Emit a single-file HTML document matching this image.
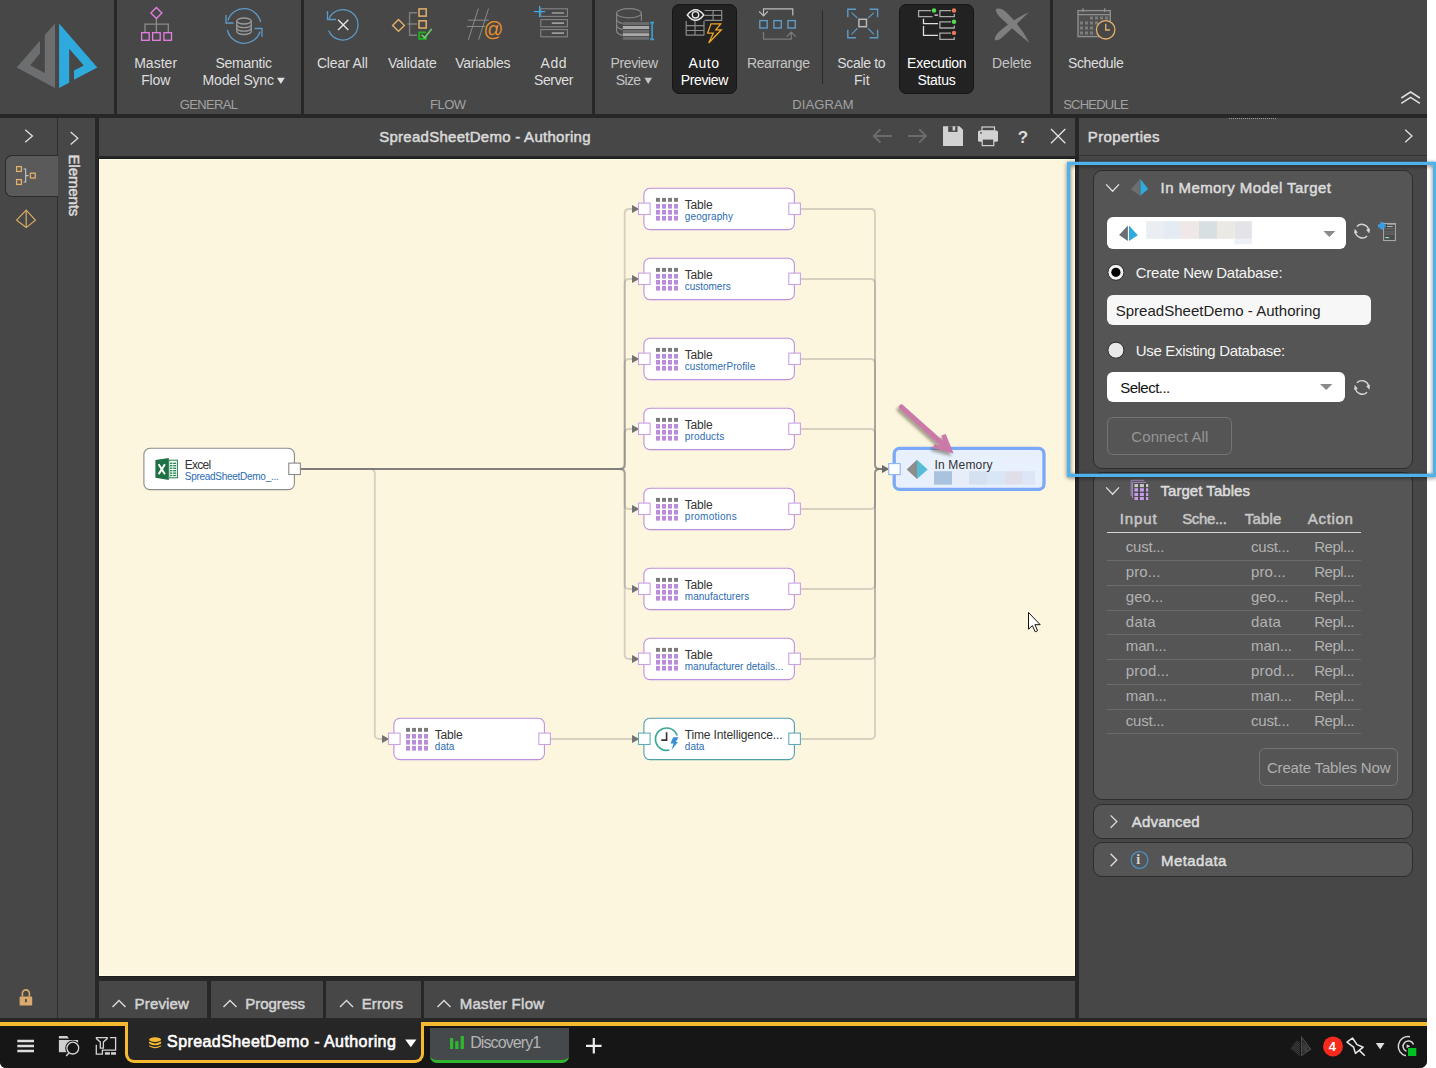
<!DOCTYPE html><html><head><meta charset="utf-8"><title>SpreadSheetDemo - Authoring</title><style>
html,body{margin:0;padding:0;background:#fff;}
body{width:1436px;height:1068px;position:relative;overflow:hidden;font-family:"Liberation Sans",sans-serif;}
#app div,#app svg,#app span{position:absolute;}
#app{position:absolute;left:0;top:0;width:1436px;height:1068px;overflow:hidden;}
#app span{white-space:pre;line-height:1;}
#app svg{overflow:visible;}
</style></head><body><div id="app"><div style="left:0px;top:0px;width:1427px;height:1068px;background:#272727;border-radius:0 0 7px 6px;"></div><div style="left:0px;top:0px;width:114px;height:114px;background:#474747;"></div><div style="left:117px;top:0px;width:184px;height:114px;background:#474747;"></div><div style="left:304px;top:0px;width:288px;height:114px;background:#474747;"></div><div style="left:595px;top:0px;width:455px;height:114px;background:#474747;"></div><div style="left:1053px;top:0px;width:374px;height:114px;background:#474747;"></div><div style="left:0px;top:118px;width:57px;height:900px;background:#474747;"></div><div style="left:57px;top:118px;width:1px;height:900px;background:#2e2e2e;"></div><div style="left:58px;top:118px;width:37px;height:900px;background:#474747;"></div><div style="left:99px;top:118px;width:976px;height:38px;background:#474747;"></div><div style="left:99px;top:159px;width:976px;height:817px;background:#fdf6df;box-shadow:inset 0 0 0 1px #fffce7, 0 0 0 1px #1d1d1f;"></div><div style="left:1079px;top:118px;width:348px;height:900px;background:#474747;"></div><div style="left:99px;top:981px;width:108px;height:37px;background:#474747;"></div><div style="left:210.5px;top:981px;width:112.5px;height:37px;background:#474747;"></div><div style="left:326px;top:981px;width:95px;height:37px;background:#474747;"></div><div style="left:424px;top:981px;width:651px;height:37px;background:#474747;"></div><div style="left:0px;top:1022px;width:1427px;height:46px;background:#161616;border-radius:0 0 7px 6px;"></div><svg style="left:0;top:0" width="1436" height="1068" viewBox="0 0 1436 1068">
<polygon points="55,23.6 55,88 16.7,67.4 40,40.8 40,53.6 30.2,65.2 44.8,73.1 44.8,34.9" fill="#6d6e70"/>
<polygon points="59.1,23.6 97.3,67.4 74,79.8 74,70.4 83.8,65.6 69.2,48.7 69.2,82.8 59.1,88" fill="#2eaadc"/>
</svg><span style="left:134.20px;top:56.00px;font-size:14px;color:#dedede;letter-spacing:0.013px;">Master</span><span style="left:141.20px;top:73.00px;font-size:14px;color:#dedede;letter-spacing:-0.167px;">Flow</span><span style="left:215.50px;top:56.00px;font-size:14px;color:#dedede;letter-spacing:-0.257px;">Semantic</span><span style="left:202.60px;top:73.00px;font-size:14px;color:#dedede;letter-spacing:-0.200px;">Model Sync</span><span style="left:179.85px;top:98.00px;font-size:13px;color:#a2a2a2;letter-spacing:-0.678px;">GENERAL</span><span style="left:316.90px;top:56.00px;font-size:14px;color:#dedede;letter-spacing:-0.148px;">Clear All</span><span style="left:387.90px;top:56.00px;font-size:14px;color:#dedede;letter-spacing:-0.086px;">Validate</span><span style="left:455.30px;top:56.00px;font-size:14px;color:#dedede;letter-spacing:-0.259px;">Variables</span><span style="left:540.60px;top:56.00px;font-size:14px;color:#dedede;letter-spacing:0.469px;">Add</span><span style="left:534.00px;top:73.00px;font-size:14px;color:#dedede;letter-spacing:-0.375px;">Server</span><span style="left:429.95px;top:98.00px;font-size:13px;color:#a2a2a2;letter-spacing:-0.464px;">FLOW</span><span style="left:610.50px;top:56.00px;font-size:14px;color:#c4c4c4;letter-spacing:-0.356px;">Preview</span><span style="left:615.80px;top:73.00px;font-size:14px;color:#c4c4c4;letter-spacing:-0.658px;">Size</span><span style="left:688.60px;top:56.00px;font-size:14px;color:#ffffff;letter-spacing:0.516px;z-index:2;">Auto</span><span style="left:680.70px;top:73.00px;font-size:14px;color:#ffffff;letter-spacing:-0.356px;z-index:2;">Preview</span><span style="left:747.00px;top:56.00px;font-size:14px;color:#c4c4c4;letter-spacing:-0.400px;">Rearrange</span><span style="left:837.30px;top:56.00px;font-size:14px;color:#dedede;letter-spacing:-0.333px;">Scale to</span><span style="left:853.90px;top:73.00px;font-size:14px;color:#dedede;letter-spacing:0.049px;">Fit</span><span style="left:907.10px;top:56.00px;font-size:14px;color:#ffffff;letter-spacing:-0.253px;z-index:2;">Execution</span><span style="left:917.40px;top:73.00px;font-size:14px;color:#ffffff;letter-spacing:-0.269px;z-index:2;">Status</span><span style="left:992.10px;top:56.00px;font-size:14px;color:#c4c4c4;letter-spacing:-0.182px;">Delete</span><span style="left:792.35px;top:98.00px;font-size:13px;color:#a2a2a2;letter-spacing:0.083px;">DIAGRAM</span><span style="left:1068.00px;top:56.00px;font-size:14px;color:#dedede;letter-spacing:-0.376px;">Schedule</span><span style="left:1063.15px;top:98.00px;font-size:13px;color:#a2a2a2;letter-spacing:-0.761px;">SCHEDULE</span><div style="left:672px;top:4px;width:65px;height:90px;background:#222222;border-radius:7px;border:1px solid #151515;box-sizing:border-box;"></div><div style="left:899px;top:4px;width:75px;height:90px;background:#222222;border-radius:7px;border:1px solid #151515;box-sizing:border-box;"></div><div style="left:822px;top:10px;width:1px;height:74px;background:#2b2b2b;"></div><svg style="left:0;top:0" width="1436" height="1068" viewBox="0 0 1436 1068">
<!-- small dropdown triangles -->
<polygon points="277,77.8 284.8,77.8 280.9,84" fill="#dedede"/>
<polygon points="644.4,77.8 652.1,77.8 648.2,84" fill="#c4c4c4"/>
<!-- collapse chevrons -->
<polyline points="1401.3,98 1410.6,92 1419.9,98" fill="none" stroke="#e0e0e0" stroke-width="1.5"/>
<polyline points="1401.3,103.3 1410.6,97.3 1419.9,103.3" fill="none" stroke="#e0e0e0" stroke-width="1.5"/>

<!-- Master Flow -->
<g fill="none" stroke-width="1.3">
<path d="M156.4,18.5V32 M145,32V24.2H168.3V32" stroke="#8c8c8c"/>
<polygon points="156.4,7.5 161.9,13 156.4,18.5 150.9,13" stroke="#e57fe3"/>
<rect x="141.6" y="32.7" width="7.6" height="7.6" stroke="#e57fe3"/>
<rect x="152.6" y="32.7" width="7.6" height="7.6" stroke="#e57fe3"/>
<rect x="163.9" y="32.7" width="7.6" height="7.6" stroke="#e57fe3"/>
</g>

<!-- Semantic model sync -->
<g fill="none" stroke="#5d9bc6" stroke-width="1.3">
<path d="M227.8,20.5A17,17 0 0 1 260.6,22"/>
<path d="M260.2,31.5A17,17 0 0 1 227.4,30"/>
<polyline points="226,15 226,23 233.5,23"/>
<polyline points="262,37 262,28.5 254.5,28.5"/>
</g>
<g fill="none" stroke="#9a9a9a" stroke-width="1.3">
<ellipse cx="244" cy="21" rx="7.2" ry="3"/>
<path d="M236.8,21V31.5A7.2,3 0 0 0 251.2,31.5V21"/>
<path d="M236.8,24.7A7.2,3 0 0 0 251.2,24.7"/>
<path d="M236.8,28.2A7.2,3 0 0 0 251.2,28.2"/>
</g>

<!-- Clear All -->
<g fill="none" stroke-width="1.3">
<path d="M329,18.5A15.2,15.2 0 1 1 328.7,30.5" stroke="#5d9bc6"/>
<polyline points="327.5,11 327.5,19.5 336,19.5" stroke="#5d9bc6"/>
<path d="M338.1,19.7L348.3,29.9M348.3,19.7L338.1,29.9" stroke="#e4e4e4" stroke-width="1.4"/>
</g>

<!-- Validate -->
<g fill="none" stroke-width="1.4">
<polygon points="398.5,19.6 404.4,25.4 398.5,31.2 392.6,25.4" stroke="#e3b06b"/>
<path d="M417,12.7H409.6V35.3H417M407.4,24H417" stroke="#7e7e7e"/>
<rect x="419" y="8.9" width="7.2" height="7.2" stroke="#e3b06b" stroke-width="1.5"/>
<rect x="419" y="20.8" width="7.2" height="7.2" stroke="#e3b06b" stroke-width="1.5"/>
<path d="M426,32.4H419.2V38.8H426V36.5" stroke="#22b322" stroke-width="1.8"/>
<polyline points="421.7,34.8 424.6,37.8 431.7,28.9" stroke="#6ddc6d" stroke-width="1.5"/>
</g>

<!-- Variables -->
<g fill="none" stroke="#8a8a8a" stroke-width="1">
<path d="M478.3,8.6L468.4,39.8M488.5,8.6L478.6,39.8M468.2,20.2H488.8M466.7,26.5H485.5"/>
</g>

<!-- Add Server -->
<g fill="none" stroke="#848484" stroke-width="1.1">
<rect x="540.8" y="8.8" width="26.6" height="7.6"/>
<rect x="540.8" y="19.6" width="26.6" height="7.2"/>
<rect x="540.8" y="29.6" width="26.6" height="7.2"/>
</g>
<path d="M551.8,13H564M551.8,23.1H564M551.8,33.1H564" stroke="#9c9c9c" stroke-width="1.7"/>
<path d="M534,11.6H545.2M539.7,6V17.2" stroke="#3fa9e8" stroke-width="1.4"/>

<!-- Preview Size -->
<g fill="none" stroke="#848484" stroke-width="1.2">
<ellipse cx="629" cy="13.3" rx="12.4" ry="4.6"/>
<path d="M616.6,13.3V31.5Q617.5,34 622.5,35.3M641.4,13.3V21"/>
<path d="M616.6,19.5Q617.5,22.3 622.5,23.5M616.6,25.5Q617.5,28.3 622.5,29.5"/>
</g>
<rect x="622.8" y="22.1" width="26.3" height="2.9" fill="#6c6c6c"/>
<rect x="622.8" y="26" width="26.3" height="3" fill="#a8a8a8"/>
<rect x="622.8" y="29.8" width="26.3" height="2.9" fill="#6c6c6c"/>
<rect x="622.8" y="33.2" width="26.3" height="2.9" fill="#a8a8a8"/>
<rect x="622.8" y="37" width="26.3" height="2.8" fill="#6c6c6c"/>
<path d="M652.1,22.6V39.4M650.1,22.6H654.1M650.1,39.4H654.1" stroke="#3b9fd8" stroke-width="1.6" fill="none"/>

<!-- Rearrange -->
<g fill="none" stroke-width="1.4">
<rect x="759.8" y="20.6" width="7.4" height="7.4" stroke="#5d9bc6"/>
<rect x="773.9" y="20.6" width="7.4" height="7.4" stroke="#5d9bc6"/>
<rect x="787.9" y="20.6" width="7.4" height="7.4" stroke="#5d9bc6"/>
<path d="M792.8,15.5V8.8H763.5V15.6M759.1,11.4L763.5,15.8L767.9,11.4" stroke="#bdbdbd" stroke-width="1.2"/>
<path d="M763.5,32V39.2H791.3V32.4M786.8,36.6L791.3,32.1L795.8,36.6" stroke="#7c7c7c" stroke-width="1.2"/>
</g>

<!-- Scale to Fit -->
<g fill="none" stroke="#5d9bc6" stroke-width="1.4">
<path d="M847.8,17.2V9.2H856M869.6,9.2H877.6V17.2M877.6,29.8V37.8H869.6M856,37.8H847.8V29.8"/>
<path d="M851.5,12.7L857.3,18M874,12.7L868.2,18M874,34.3L868.2,28.5M851.5,34.3L857.3,28.5" stroke-width="1.1"/>
</g>
<rect x="858.9" y="19.3" width="7.6" height="7.4" fill="none" stroke="#b8b8b8" stroke-width="1.5"/>

<!-- Delete -->
<path d="M996,9Q1001,7 1008,14Q1022,28 1029.5,43Q1017,33 1003,20Q995,13 996,9Z" fill="#7e7e7e"/>
<path d="M995,40Q994,36 1001,30Q1014,19 1029,12Q1020,21 1007,33Q998,42 995,40Z" fill="#7e7e7e"/>

<!-- Schedule -->
<rect x="1078" y="10.6" width="32.3" height="26" fill="#505050" stroke="#8e8e8e" stroke-width="1.4"/>
<path d="M1078,14.6H1110.3" stroke="#8e8e8e" stroke-width="1.2"/>
<path d="M1083,8.3V12M1104.6,8.3V12" stroke="#8e8e8e" stroke-width="1.4"/>
<g fill="#7c7c7c">
<rect x="1090" y="16.5" width="3" height="3"/><rect x="1095" y="16.5" width="3" height="3"/><rect x="1100" y="16.5" width="3" height="3"/><rect x="1105" y="16.5" width="3" height="3"/>
<rect x="1080" y="21.5" width="3" height="3"/><rect x="1085" y="21.5" width="3" height="3"/><rect x="1090" y="21.5" width="3" height="3"/><rect x="1095" y="21.5" width="3" height="3"/>
<rect x="1080" y="26.5" width="3" height="3"/><rect x="1085" y="26.5" width="3" height="3"/><rect x="1090" y="26.5" width="3" height="3"/>
<rect x="1080" y="31.5" width="3" height="3"/><rect x="1085" y="31.5" width="3" height="3"/><rect x="1090" y="31.5" width="3" height="3"/>
</g>
<circle cx="1105.7" cy="29.8" r="9.2" fill="#474747" stroke="#e3b06b" stroke-width="1.3"/>
<path d="M1105.7,23.8V30H1110" fill="none" stroke="#e3b06b" stroke-width="1.3"/>
</svg><span style="left:483.42px;top:19.79px;font-size:19.5px;color:#e8912c;">@</span><svg style="left:0;top:0;z-index:3" width="1436" height="120" viewBox="0 0 1436 120">
<!-- Auto preview -->
<g fill="none" stroke="#8a8a8a" stroke-width="1.2">
<path d="M704.6,10.5H721.7V20.4H704.6M713.1,10.5V20.4M704.6,15.4H721.7"/>
<path d="M686.2,21V35.2H704M686.2,25.7H704M686.2,30.5H704M695,21V35.2M704,21V35.2"/>
</g>
<path d="M687.3,15Q695.5,4.5 703.8,15Q695.5,25.5 687.3,15Z" fill="#222" stroke="#e8e8e8" stroke-width="1.4"/>
<circle cx="695.5" cy="14.8" r="3.2" fill="none" stroke="#e8e8e8" stroke-width="1.4"/>
<path d="M711,23.8H720.7L715.8,29.8H721.3L708.7,43L713.3,33.2H707.6Z" fill="none" stroke="#f0a426" stroke-width="1.3"/>
<!-- Execution status -->
<g fill="none" stroke="#a8a8a8" stroke-width="1.3">
<path d="M931,10.6H918.6V16.6H932.5M951,10.6H939.9V16.6H954.3V14"/>
<path d="M951,21.8H939.9V28H954.3V25.5M951,33.2H939.9V39.4H954.3V37"/>
</g>
<path d="M923.5,18.8V23.7H938M923.5,26V35.3H938M934.5,15.2H938" fill="none" stroke="#e0e0e0" stroke-width="1.3"/>
<circle cx="934" cy="10.5" r="2.2" fill="#4fe04f"/>
<circle cx="954" cy="10.5" r="2.2" fill="#ea7858"/>
<circle cx="954" cy="21.8" r="2.2" fill="#4fe04f"/>
<circle cx="954" cy="32.9" r="2.2" fill="#ea7858"/>
</svg><span style="left:379.15px;top:129.00px;font-size:15px;color:#dadada;-webkit-text-stroke:0.5px #dadada;letter-spacing:0.271px;">SpreadSheetDemo - Authoring</span><svg style="left:0;top:0" width="1436" height="1068" viewBox="0 0 1436 1068">
<g fill="none" stroke="#6c6c6c" stroke-width="2">
<path d="M891.7,135.9H874M880.5,129.2L873.8,135.9L880.5,142.6"/>
<path d="M908,135.9H925.7M919.2,129.2L925.9,135.9L919.2,142.6"/>
</g>
<!-- save -->
<path d="M943,126.3H959.5L963,129.8V145.9H943Z" fill="#d2d2d2"/>
<rect x="948.2" y="126.3" width="9.3" height="5.6" fill="#474747"/>
<rect x="952.6" y="126.3" width="2.6" height="4.2" fill="#d2d2d2"/>
<!-- print -->
<rect x="982" y="127" width="12.5" height="4" fill="none" stroke="#d2d2d2" stroke-width="1.2"/>
<rect x="978" y="130.6" width="20" height="11.2" rx="1.5" fill="#d2d2d2"/>
<rect x="980" y="132.3" width="2" height="1.2" fill="#474747"/>
<rect x="982.2" y="139" width="11.6" height="6.6" fill="#474747" stroke="#d2d2d2" stroke-width="1.2"/>
<!-- close -->
<path d="M1051,129L1065.3,143.3M1065.3,129L1051,143.3" stroke="#e2e2e2" stroke-width="1.3"/>
<!-- left panel chevrons -->
<polyline points="25.2,129.8 32.4,136 25.2,142.2" fill="none" stroke="#e0e0e0" stroke-width="1.3"/>
<polyline points="70.7,132 77.8,138.3 70.7,144.6" fill="none" stroke="#e0e0e0" stroke-width="1.3"/>
<polyline points="1405.2,129.7 1412,136 1405.2,142.3" fill="none" stroke="#e0e0e0" stroke-width="1.3"/>
</svg><span style="left:1017.75px;top:129.00px;font-size:17px;color:#dcdcdc;font-weight:700;">?</span><span style="left:1087.75px;top:129.00px;font-size:15px;color:#dadada;-webkit-text-stroke:0.5px #dadada;letter-spacing:0.386px;">Properties</span><div style="left:1229px;top:118px;width:47px;height:1px;background:repeating-linear-gradient(90deg,#9a9a9a 0 1px,transparent 1px 2px);"></div><div style="left:1079px;top:155px;width:348px;height:1px;background:#333333;"></div><div style="left:5px;top:155px;width:53px;height:42px;background:#5a5a5a;border-radius:7px 0 0 7px;border:1px solid #2b2b2b;border-right:none;box-sizing:border-box;"></div><svg style="left:0;top:0" width="1436" height="1068" viewBox="0 0 1436 1068">
<g fill="none" stroke="#e3b06b" stroke-width="1.3">
<rect x="16.6" y="166.6" width="4.8" height="4.8"/>
<rect x="16.6" y="179.6" width="4.8" height="4.8"/>
<rect x="30.4" y="173.2" width="4.8" height="4.8"/>
</g>
<path d="M23.5,169H25.7V182H23.5M25.7,175.6H28.5" fill="none" stroke="#c8c8c8" stroke-width="1.1"/>
<g fill="none" stroke="#d8ac68" stroke-width="1.2">
<polygon points="26.2,210.2 35.4,220.2 26.2,227.6 16.6,220.2"/>
<path d="M26.2,210.2V227.6"/>
</g>
<!-- lock -->
<rect x="19.6" y="996.6" width="12.6" height="9" rx="0.8" fill="#d9a96d"/>
<path d="M22.4,996.6V993.4A3.5,3.5 0 0 1 29.4,993.4V996.6" fill="none" stroke="#d9a96d" stroke-width="1.6"/>
<rect x="25" y="999" width="1.8" height="3.2" fill="#474747"/>
</svg><span style="left:-0.75px;top:-13.00px;font-size:15px;color:#dadada;-webkit-text-stroke:0.5px #dadada;letter-spacing:-0.112px;transform-origin:0 0;transform:translate(83px,167.6px) rotate(90deg);">Elements</span><span style="left:134.55px;top:996.00px;font-size:15px;color:#d4d4d4;-webkit-text-stroke:0.5px #d4d4d4;letter-spacing:0.165px;">Preview</span><span style="left:245.25px;top:996.00px;font-size:15px;color:#d4d4d4;-webkit-text-stroke:0.5px #d4d4d4;letter-spacing:-0.026px;">Progress</span><span style="left:361.75px;top:996.00px;font-size:15px;color:#d4d4d4;-webkit-text-stroke:0.5px #d4d4d4;letter-spacing:0.101px;">Errors</span><span style="left:459.75px;top:996.00px;font-size:15px;color:#d4d4d4;-webkit-text-stroke:0.5px #d4d4d4;letter-spacing:0.266px;">Master Flow</span><svg style="left:0;top:0" width="1436" height="1068" viewBox="0 0 1436 1068">
<g fill="none" stroke="#dcdcdc" stroke-width="1.4">
<polyline points="112.5,1007 119,1000.5 125.5,1007"/>
<polyline points="223.5,1007 230,1000.5 236.5,1007"/>
<polyline points="340,1007 346.5,1000.5 353,1007"/>
<polyline points="437.5,1007 444,1000.5 450.5,1007"/>
</g>
</svg><div style="left:0px;top:1022px;width:1427px;height:4px;background:#f6b92f;"></div><div style="left:125px;top:1022px;width:298.5px;height:41px;background:#262626;border:3.5px solid #f6b92f;border-top:none;border-radius:0 0 9px 9px;box-sizing:border-box;"></div><div style="left:128.5px;top:1022px;width:291.5px;height:4px;background:#262626;"></div><span style="left:167.10px;top:1034.00px;font-size:16px;color:#ffffff;-webkit-text-stroke:0.6px #ffffff;letter-spacing:0.416px;">SpreadSheetDemo - Authoring</span><div style="left:430px;top:1028.4px;width:139.3px;height:34.6px;background:#45494c;border-radius:0 0 7px 7px;border-bottom:3px solid #2fb62f;box-sizing:border-box;"></div><span style="left:470.20px;top:1035.00px;font-size:16px;color:#b4b4b4;letter-spacing:-0.900px;">Discovery1</span><svg style="left:0;top:0" width="1436" height="1068" viewBox="0 0 1436 1068">
<!-- hamburger -->
<path d="M17.3,1040.9H34M17.3,1046H34M17.3,1051H34" stroke="#dcdcdc" stroke-width="2.5"/>
<!-- folder search -->
<path d="M58.9,1036.1H67.2L68.9,1038.6H58.9Z" fill="#d0d0d0"/>
<rect x="58.9" y="1040" width="19.2" height="12.2" fill="#d0d0d0"/>
<circle cx="72.8" cy="1048.1" r="7.6" fill="#161616"/>
<circle cx="72.8" cy="1048.1" r="5.9" fill="#161616" stroke="#d4d4d4" stroke-width="1.3"/>
<path d="M68.9,1053L66.2,1056" stroke="#d4d4d4" stroke-width="1.5"/>
<!-- filter/diagram -->
<path d="M96.4,1037.6H107.2V1038.6L103.4,1042V1048.2H100.3V1042L96.4,1038.6Z" fill="none" stroke="#d4d4d4" stroke-width="1.3"/>
<path d="M109.9,1037.6H115.6V1050.2H102.4V1054.1H96.3V1044.7" fill="none" stroke="#d4d4d4" stroke-width="1.3"/>
<rect x="104.9" y="1052.2" width="5" height="2.5" fill="#d4d4d4"/><rect x="111" y="1052.2" width="5" height="2.5" fill="#d4d4d4"/>
<!-- db icon -->
<g fill="#f6b92f">
<ellipse cx="155.1" cy="1039.6" rx="6" ry="2.3"/>
<path d="M149.1,1041.6Q155.1,1045.2 161.1,1041.6V1043.4Q155.1,1047.2 149.1,1043.4Z"/>
<path d="M149.1,1045.2Q155.1,1048.8 161.1,1045.2V1046.2Q155.1,1050.2 149.1,1046.2Z"/>
</g>
<polygon points="405.2,1039.6 416.4,1039.6 410.8,1047.2" fill="#ffffff"/>
<!-- discovery bars -->
<rect x="450" y="1038" width="3.2" height="11" fill="#2fb62f"/>
<rect x="455.2" y="1041.2" width="3.3" height="7.8" fill="#2fb62f"/>
<rect x="460.6" y="1036" width="3.3" height="13" fill="#2fb62f"/>
<!-- plus -->
<path d="M586,1045.8H601.6M593.8,1038V1053.6" stroke="#ececec" stroke-width="2.2"/>
<!-- dim pyramid logo -->
<clipPath id="lp"><polygon points="1299.9,1036.6 1290.5,1048.3 1299.9,1056.2"/></clipPath>
<path d="M1289,1046.59L1301,1056.55M1289,1044.59L1301,1054.55M1289,1042.59L1301,1052.55M1289,1040.59L1301,1050.55M1289,1038.59L1301,1048.55M1289,1036.59L1301,1046.55M1289,1034.59L1301,1044.55" stroke="#4c4c4c" stroke-width="0.95" fill="none" clip-path="url(#lp)"/>
<polygon points="1302.3,1040.5 1305.6,1044.8 1305.6,1051.2 1302.3,1053.6" fill="#393939"/>
<polygon points="1301.5,1037.4 1310.6,1049.2 1301.5,1055.4" fill="none" stroke="#4e4e4e" stroke-width="1.1"/>
<path d="M1305.9,1044.5V1052" stroke="#4e4e4e" stroke-width="1"/>
<polygon points="1306.8,1046.8 1309.4,1049.2 1306.8,1051" fill="none" stroke="#4e4e4e" stroke-width="0.8"/>
<!-- badge -->
<circle cx="1333" cy="1046.4" r="10" fill="#f62a1d"/>
<!-- pin -->
<g fill="none" stroke="#e8e8e8" stroke-width="1.5" stroke-linejoin="round">
<path d="M1352.5,1038L1347,1042.2L1353.6,1047.2L1355.4,1053.4L1363.2,1047.2L1357,1044.6Z"/>
<path d="M1359.3,1050.4L1364.8,1055.8"/>
</g>
<polygon points="1375.8,1043 1384.5,1043 1380.2,1049.6" fill="#e0e0e0"/>
<!-- target icon -->
<g fill="none" stroke="#d8d8d8" stroke-width="1.5">
<path d="M1410,1036.8A9.6,9.6 0 1 0 1406,1055.8"/>
<path d="M1413.5,1044.5A5.4,5.4 0 1 0 1406.5,1051.4"/>
</g>
<polygon points="1406.6,1044.2 1410.4,1046.2 1406.6,1048" fill="#d8d8d8"/>
<rect x="1408" y="1048" width="8.3" height="8" fill="#00c220"/>
</svg><span style="left:1328.65px;top:1040.00px;font-size:13px;color:#ffffff;font-weight:700;">4</span><svg style="left:0;top:0" width="1436" height="1068" viewBox="0 0 1436 1068"><path d="M300.5,469H620.2Q624.7,469 624.7,464.5V213.5Q624.7,209 629.2,209H633" fill="none" stroke="rgba(118,118,118,0.29)" stroke-width="1.9"/><polygon points="632.0,205.1 639.4,209 632.0,212.9" fill="#727272"/><path d="M300.5,469H620.2Q624.7,469 624.7,464.5V283.5Q624.7,279 629.2,279H633" fill="none" stroke="rgba(118,118,118,0.29)" stroke-width="1.9"/><polygon points="632.0,275.1 639.4,279 632.0,282.9" fill="#727272"/><path d="M300.5,469H620.2Q624.7,469 624.7,464.5V363.5Q624.7,359 629.2,359H633" fill="none" stroke="rgba(118,118,118,0.29)" stroke-width="1.9"/><polygon points="632.0,355.1 639.4,359 632.0,362.9" fill="#727272"/><path d="M300.5,469H620.2Q624.7,469 624.7,464.5V433.5Q624.7,429 629.2,429H633" fill="none" stroke="rgba(118,118,118,0.29)" stroke-width="1.9"/><polygon points="632.0,425.1 639.4,429 632.0,432.9" fill="#727272"/><path d="M300.5,469H620.2Q624.7,469 624.7,473.5V504.5Q624.7,509 629.2,509H633" fill="none" stroke="rgba(118,118,118,0.29)" stroke-width="1.9"/><polygon points="632.0,505.1 639.4,509 632.0,512.9" fill="#727272"/><path d="M300.5,469H620.2Q624.7,469 624.7,473.5V584.5Q624.7,589 629.2,589H633" fill="none" stroke="rgba(118,118,118,0.29)" stroke-width="1.9"/><polygon points="632.0,585.1 639.4,589 632.0,592.9" fill="#727272"/><path d="M300.5,469H620.2Q624.7,469 624.7,473.5V654.5Q624.7,659 629.2,659H633" fill="none" stroke="rgba(118,118,118,0.29)" stroke-width="1.9"/><polygon points="632.0,655.1 639.4,659 632.0,662.9" fill="#727272"/><path d="M300.5,469H370.3Q374.8,469 374.8,473.5V734.5Q374.8,739 379.3,739H383" fill="none" stroke="rgba(118,118,118,0.29)" stroke-width="1.9"/><polygon points="382.0,735.1 389.4,739 382.0,742.9" fill="#727272"/><path d="M550.5,739H633" fill="none" stroke="rgba(118,118,118,0.29)" stroke-width="1.9"/><polygon points="632.0,735.1 639.4,739 632.0,742.9" fill="#727272"/><path d="M800.5,209H870.5Q875,209 875,213.5V464.5Q875,469 879.5,469H883" fill="none" stroke="rgba(118,118,118,0.29)" stroke-width="1.9"/><path d="M800.5,279H870.5Q875,279 875,283.5V464.5Q875,469 879.5,469H883" fill="none" stroke="rgba(118,118,118,0.29)" stroke-width="1.9"/><path d="M800.5,359H870.5Q875,359 875,363.5V464.5Q875,469 879.5,469H883" fill="none" stroke="rgba(118,118,118,0.29)" stroke-width="1.9"/><path d="M800.5,429H870.5Q875,429 875,433.5V464.5Q875,469 879.5,469H883" fill="none" stroke="rgba(118,118,118,0.29)" stroke-width="1.9"/><path d="M800.5,509H870.5Q875,509 875,504.5V473.5Q875,469 879.5,469H883" fill="none" stroke="rgba(118,118,118,0.29)" stroke-width="1.9"/><path d="M800.5,589H870.5Q875,589 875,584.5V473.5Q875,469 879.5,469H883" fill="none" stroke="rgba(118,118,118,0.29)" stroke-width="1.9"/><path d="M800.5,659H870.5Q875,659 875,654.5V473.5Q875,469 879.5,469H883" fill="none" stroke="rgba(118,118,118,0.29)" stroke-width="1.9"/><path d="M800.5,739H870.5Q875,739 875,734.5V473.5Q875,469 879.5,469H883" fill="none" stroke="rgba(118,118,118,0.29)" stroke-width="1.9"/><polygon points="882.0,465.1 889.4,469 882.0,472.9" fill="#6a6a6a"/><rect x="143.9" y="448.3" width="150.5" height="41.3" rx="6" fill="#ffffff" stroke="#8a8a8a" stroke-width="1.1"/><rect x="288.8" y="463.1" width="11.6" height="11.4" fill="#ffffff" stroke="#8a8a8a" stroke-width="1.1"/><rect x="643.9" y="188.3" width="150.5" height="41.3" rx="6" fill="#ffffff" stroke="#c08fdf" stroke-width="1.1"/><rect x="638.5" y="203.10000000000002" width="11.6" height="11.4" fill="#ffffff" stroke="#c9a2e4" stroke-width="1.1"/><rect x="788.8" y="203.10000000000002" width="11.6" height="11.4" fill="#ffffff" stroke="#c9a2e4" stroke-width="1.1"/><rect x="656.0" y="197.9" width="4" height="3.9" fill="#7b7b7b"/><rect x="656.0" y="204.0" width="4" height="4.6" fill="#b98cdc"/><rect x="656.0" y="210.0" width="4" height="4.6" fill="#b98cdc"/><rect x="656.0" y="216.0" width="4" height="4.6" fill="#b98cdc"/><rect x="662.0" y="197.9" width="4" height="3.9" fill="#7b7b7b"/><rect x="662.0" y="204.0" width="4" height="4.6" fill="#b98cdc"/><rect x="662.0" y="210.0" width="4" height="4.6" fill="#b98cdc"/><rect x="662.0" y="216.0" width="4" height="4.6" fill="#b98cdc"/><rect x="668.0" y="197.9" width="4" height="3.9" fill="#7b7b7b"/><rect x="668.0" y="204.0" width="4" height="4.6" fill="#b98cdc"/><rect x="668.0" y="210.0" width="4" height="4.6" fill="#b98cdc"/><rect x="668.0" y="216.0" width="4" height="4.6" fill="#b98cdc"/><rect x="674.0" y="197.9" width="4" height="3.9" fill="#7b7b7b"/><rect x="674.0" y="204.0" width="4" height="4.6" fill="#b98cdc"/><rect x="674.0" y="210.0" width="4" height="4.6" fill="#b98cdc"/><rect x="674.0" y="216.0" width="4" height="4.6" fill="#b98cdc"/><rect x="643.9" y="258.3" width="150.5" height="41.3" rx="6" fill="#ffffff" stroke="#c08fdf" stroke-width="1.1"/><rect x="638.5" y="273.1" width="11.6" height="11.4" fill="#ffffff" stroke="#c9a2e4" stroke-width="1.1"/><rect x="788.8" y="273.1" width="11.6" height="11.4" fill="#ffffff" stroke="#c9a2e4" stroke-width="1.1"/><rect x="656.0" y="267.90000000000003" width="4" height="3.9" fill="#7b7b7b"/><rect x="656.0" y="274.00000000000006" width="4" height="4.6" fill="#b98cdc"/><rect x="656.0" y="280.00000000000006" width="4" height="4.6" fill="#b98cdc"/><rect x="656.0" y="286.00000000000006" width="4" height="4.6" fill="#b98cdc"/><rect x="662.0" y="267.90000000000003" width="4" height="3.9" fill="#7b7b7b"/><rect x="662.0" y="274.00000000000006" width="4" height="4.6" fill="#b98cdc"/><rect x="662.0" y="280.00000000000006" width="4" height="4.6" fill="#b98cdc"/><rect x="662.0" y="286.00000000000006" width="4" height="4.6" fill="#b98cdc"/><rect x="668.0" y="267.90000000000003" width="4" height="3.9" fill="#7b7b7b"/><rect x="668.0" y="274.00000000000006" width="4" height="4.6" fill="#b98cdc"/><rect x="668.0" y="280.00000000000006" width="4" height="4.6" fill="#b98cdc"/><rect x="668.0" y="286.00000000000006" width="4" height="4.6" fill="#b98cdc"/><rect x="674.0" y="267.90000000000003" width="4" height="3.9" fill="#7b7b7b"/><rect x="674.0" y="274.00000000000006" width="4" height="4.6" fill="#b98cdc"/><rect x="674.0" y="280.00000000000006" width="4" height="4.6" fill="#b98cdc"/><rect x="674.0" y="286.00000000000006" width="4" height="4.6" fill="#b98cdc"/><rect x="643.9" y="338.3" width="150.5" height="41.3" rx="6" fill="#ffffff" stroke="#c08fdf" stroke-width="1.1"/><rect x="638.5" y="353.1" width="11.6" height="11.4" fill="#ffffff" stroke="#c9a2e4" stroke-width="1.1"/><rect x="788.8" y="353.1" width="11.6" height="11.4" fill="#ffffff" stroke="#c9a2e4" stroke-width="1.1"/><rect x="656.0" y="347.90000000000003" width="4" height="3.9" fill="#7b7b7b"/><rect x="656.0" y="354.00000000000006" width="4" height="4.6" fill="#b98cdc"/><rect x="656.0" y="360.00000000000006" width="4" height="4.6" fill="#b98cdc"/><rect x="656.0" y="366.00000000000006" width="4" height="4.6" fill="#b98cdc"/><rect x="662.0" y="347.90000000000003" width="4" height="3.9" fill="#7b7b7b"/><rect x="662.0" y="354.00000000000006" width="4" height="4.6" fill="#b98cdc"/><rect x="662.0" y="360.00000000000006" width="4" height="4.6" fill="#b98cdc"/><rect x="662.0" y="366.00000000000006" width="4" height="4.6" fill="#b98cdc"/><rect x="668.0" y="347.90000000000003" width="4" height="3.9" fill="#7b7b7b"/><rect x="668.0" y="354.00000000000006" width="4" height="4.6" fill="#b98cdc"/><rect x="668.0" y="360.00000000000006" width="4" height="4.6" fill="#b98cdc"/><rect x="668.0" y="366.00000000000006" width="4" height="4.6" fill="#b98cdc"/><rect x="674.0" y="347.90000000000003" width="4" height="3.9" fill="#7b7b7b"/><rect x="674.0" y="354.00000000000006" width="4" height="4.6" fill="#b98cdc"/><rect x="674.0" y="360.00000000000006" width="4" height="4.6" fill="#b98cdc"/><rect x="674.0" y="366.00000000000006" width="4" height="4.6" fill="#b98cdc"/><rect x="643.9" y="408.3" width="150.5" height="41.3" rx="6" fill="#ffffff" stroke="#c08fdf" stroke-width="1.1"/><rect x="638.5" y="423.1" width="11.6" height="11.4" fill="#ffffff" stroke="#c9a2e4" stroke-width="1.1"/><rect x="788.8" y="423.1" width="11.6" height="11.4" fill="#ffffff" stroke="#c9a2e4" stroke-width="1.1"/><rect x="656.0" y="417.90000000000003" width="4" height="3.9" fill="#7b7b7b"/><rect x="656.0" y="424.00000000000006" width="4" height="4.6" fill="#b98cdc"/><rect x="656.0" y="430.00000000000006" width="4" height="4.6" fill="#b98cdc"/><rect x="656.0" y="436.00000000000006" width="4" height="4.6" fill="#b98cdc"/><rect x="662.0" y="417.90000000000003" width="4" height="3.9" fill="#7b7b7b"/><rect x="662.0" y="424.00000000000006" width="4" height="4.6" fill="#b98cdc"/><rect x="662.0" y="430.00000000000006" width="4" height="4.6" fill="#b98cdc"/><rect x="662.0" y="436.00000000000006" width="4" height="4.6" fill="#b98cdc"/><rect x="668.0" y="417.90000000000003" width="4" height="3.9" fill="#7b7b7b"/><rect x="668.0" y="424.00000000000006" width="4" height="4.6" fill="#b98cdc"/><rect x="668.0" y="430.00000000000006" width="4" height="4.6" fill="#b98cdc"/><rect x="668.0" y="436.00000000000006" width="4" height="4.6" fill="#b98cdc"/><rect x="674.0" y="417.90000000000003" width="4" height="3.9" fill="#7b7b7b"/><rect x="674.0" y="424.00000000000006" width="4" height="4.6" fill="#b98cdc"/><rect x="674.0" y="430.00000000000006" width="4" height="4.6" fill="#b98cdc"/><rect x="674.0" y="436.00000000000006" width="4" height="4.6" fill="#b98cdc"/><rect x="643.9" y="488.3" width="150.5" height="41.3" rx="6" fill="#ffffff" stroke="#c08fdf" stroke-width="1.1"/><rect x="638.5" y="503.1" width="11.6" height="11.4" fill="#ffffff" stroke="#c9a2e4" stroke-width="1.1"/><rect x="788.8" y="503.1" width="11.6" height="11.4" fill="#ffffff" stroke="#c9a2e4" stroke-width="1.1"/><rect x="656.0" y="497.90000000000003" width="4" height="3.9" fill="#7b7b7b"/><rect x="656.0" y="504.00000000000006" width="4" height="4.6" fill="#b98cdc"/><rect x="656.0" y="510.00000000000006" width="4" height="4.6" fill="#b98cdc"/><rect x="656.0" y="516.0" width="4" height="4.6" fill="#b98cdc"/><rect x="662.0" y="497.90000000000003" width="4" height="3.9" fill="#7b7b7b"/><rect x="662.0" y="504.00000000000006" width="4" height="4.6" fill="#b98cdc"/><rect x="662.0" y="510.00000000000006" width="4" height="4.6" fill="#b98cdc"/><rect x="662.0" y="516.0" width="4" height="4.6" fill="#b98cdc"/><rect x="668.0" y="497.90000000000003" width="4" height="3.9" fill="#7b7b7b"/><rect x="668.0" y="504.00000000000006" width="4" height="4.6" fill="#b98cdc"/><rect x="668.0" y="510.00000000000006" width="4" height="4.6" fill="#b98cdc"/><rect x="668.0" y="516.0" width="4" height="4.6" fill="#b98cdc"/><rect x="674.0" y="497.90000000000003" width="4" height="3.9" fill="#7b7b7b"/><rect x="674.0" y="504.00000000000006" width="4" height="4.6" fill="#b98cdc"/><rect x="674.0" y="510.00000000000006" width="4" height="4.6" fill="#b98cdc"/><rect x="674.0" y="516.0" width="4" height="4.6" fill="#b98cdc"/><rect x="643.9" y="568.3" width="150.5" height="41.3" rx="6" fill="#ffffff" stroke="#c08fdf" stroke-width="1.1"/><rect x="638.5" y="583.0999999999999" width="11.6" height="11.4" fill="#ffffff" stroke="#c9a2e4" stroke-width="1.1"/><rect x="788.8" y="583.0999999999999" width="11.6" height="11.4" fill="#ffffff" stroke="#c9a2e4" stroke-width="1.1"/><rect x="656.0" y="577.9" width="4" height="3.9" fill="#7b7b7b"/><rect x="656.0" y="584.0" width="4" height="4.6" fill="#b98cdc"/><rect x="656.0" y="590.0" width="4" height="4.6" fill="#b98cdc"/><rect x="656.0" y="596.0" width="4" height="4.6" fill="#b98cdc"/><rect x="662.0" y="577.9" width="4" height="3.9" fill="#7b7b7b"/><rect x="662.0" y="584.0" width="4" height="4.6" fill="#b98cdc"/><rect x="662.0" y="590.0" width="4" height="4.6" fill="#b98cdc"/><rect x="662.0" y="596.0" width="4" height="4.6" fill="#b98cdc"/><rect x="668.0" y="577.9" width="4" height="3.9" fill="#7b7b7b"/><rect x="668.0" y="584.0" width="4" height="4.6" fill="#b98cdc"/><rect x="668.0" y="590.0" width="4" height="4.6" fill="#b98cdc"/><rect x="668.0" y="596.0" width="4" height="4.6" fill="#b98cdc"/><rect x="674.0" y="577.9" width="4" height="3.9" fill="#7b7b7b"/><rect x="674.0" y="584.0" width="4" height="4.6" fill="#b98cdc"/><rect x="674.0" y="590.0" width="4" height="4.6" fill="#b98cdc"/><rect x="674.0" y="596.0" width="4" height="4.6" fill="#b98cdc"/><rect x="643.9" y="638.3" width="150.5" height="41.3" rx="6" fill="#ffffff" stroke="#c08fdf" stroke-width="1.1"/><rect x="638.5" y="653.0999999999999" width="11.6" height="11.4" fill="#ffffff" stroke="#c9a2e4" stroke-width="1.1"/><rect x="788.8" y="653.0999999999999" width="11.6" height="11.4" fill="#ffffff" stroke="#c9a2e4" stroke-width="1.1"/><rect x="656.0" y="647.9" width="4" height="3.9" fill="#7b7b7b"/><rect x="656.0" y="654.0" width="4" height="4.6" fill="#b98cdc"/><rect x="656.0" y="660.0" width="4" height="4.6" fill="#b98cdc"/><rect x="656.0" y="666.0" width="4" height="4.6" fill="#b98cdc"/><rect x="662.0" y="647.9" width="4" height="3.9" fill="#7b7b7b"/><rect x="662.0" y="654.0" width="4" height="4.6" fill="#b98cdc"/><rect x="662.0" y="660.0" width="4" height="4.6" fill="#b98cdc"/><rect x="662.0" y="666.0" width="4" height="4.6" fill="#b98cdc"/><rect x="668.0" y="647.9" width="4" height="3.9" fill="#7b7b7b"/><rect x="668.0" y="654.0" width="4" height="4.6" fill="#b98cdc"/><rect x="668.0" y="660.0" width="4" height="4.6" fill="#b98cdc"/><rect x="668.0" y="666.0" width="4" height="4.6" fill="#b98cdc"/><rect x="674.0" y="647.9" width="4" height="3.9" fill="#7b7b7b"/><rect x="674.0" y="654.0" width="4" height="4.6" fill="#b98cdc"/><rect x="674.0" y="660.0" width="4" height="4.6" fill="#b98cdc"/><rect x="674.0" y="666.0" width="4" height="4.6" fill="#b98cdc"/><rect x="393.9" y="718.3" width="150.5" height="41.3" rx="6" fill="#ffffff" stroke="#c08fdf" stroke-width="1.1"/><rect x="388.5" y="733.0999999999999" width="11.6" height="11.4" fill="#ffffff" stroke="#c9a2e4" stroke-width="1.1"/><rect x="538.8" y="733.0999999999999" width="11.6" height="11.4" fill="#ffffff" stroke="#c9a2e4" stroke-width="1.1"/><rect x="406.0" y="727.9" width="4" height="3.9" fill="#7b7b7b"/><rect x="406.0" y="734.0" width="4" height="4.6" fill="#b98cdc"/><rect x="406.0" y="740.0" width="4" height="4.6" fill="#b98cdc"/><rect x="406.0" y="746.0" width="4" height="4.6" fill="#b98cdc"/><rect x="412.0" y="727.9" width="4" height="3.9" fill="#7b7b7b"/><rect x="412.0" y="734.0" width="4" height="4.6" fill="#b98cdc"/><rect x="412.0" y="740.0" width="4" height="4.6" fill="#b98cdc"/><rect x="412.0" y="746.0" width="4" height="4.6" fill="#b98cdc"/><rect x="418.0" y="727.9" width="4" height="3.9" fill="#7b7b7b"/><rect x="418.0" y="734.0" width="4" height="4.6" fill="#b98cdc"/><rect x="418.0" y="740.0" width="4" height="4.6" fill="#b98cdc"/><rect x="418.0" y="746.0" width="4" height="4.6" fill="#b98cdc"/><rect x="424.0" y="727.9" width="4" height="3.9" fill="#7b7b7b"/><rect x="424.0" y="734.0" width="4" height="4.6" fill="#b98cdc"/><rect x="424.0" y="740.0" width="4" height="4.6" fill="#b98cdc"/><rect x="424.0" y="746.0" width="4" height="4.6" fill="#b98cdc"/><rect x="643.9" y="718.3" width="150.5" height="41.3" rx="6" fill="#ffffff" stroke="#4f9fb0" stroke-width="1.1"/><rect x="638.5" y="733.0999999999999" width="11.6" height="11.4" fill="#ffffff" stroke="#62abb9" stroke-width="1.1"/><rect x="788.8" y="733.0999999999999" width="11.6" height="11.4" fill="#ffffff" stroke="#62abb9" stroke-width="1.1"/>
<polygon points="155.4,460.1 168.8,457.9 168.8,479.9 155.4,477.8" fill="#1e7145"/>
<rect x="168.8" y="460.2" width="8.6" height="17.6" fill="#ffffff" stroke="#2a7a4f" stroke-width="1"/>
<g fill="#2f8a5a"><rect x="170" y="462.6" width="2.4" height="1.4"/><rect x="173.1" y="462.6" width="3" height="1.4"/>
<rect x="170" y="465" width="2.4" height="1.4"/><rect x="173.1" y="465" width="3" height="1.4"/>
<rect x="170" y="467.5" width="2.4" height="1.4"/><rect x="173.1" y="467.5" width="3" height="1.4"/>
<rect x="170" y="470" width="2.4" height="1.4"/><rect x="173.1" y="470" width="3" height="1.4"/>
<rect x="170" y="472.4" width="2.4" height="1.4"/><rect x="173.1" y="472.4" width="3" height="1.4"/>
<rect x="170" y="474.8" width="2.4" height="1.4"/><rect x="173.1" y="474.8" width="3" height="1.4"/></g>
<path d="M158.6,464.2L164.9,474.2M164.9,464.2L158.6,474.2" stroke="#ffffff" stroke-width="2"/>

<path d="M677.2,735.5A11.2,11.2 0 1 0 669.5,750" fill="none" stroke="#3aa894" stroke-width="1.6"/>
<path d="M666.6,732.3V740.1H661.3" fill="none" stroke="#333333" stroke-width="1.6"/>
<polygon points="673.2,737.3 678.6,737.3 675.8,742 678,742 671.4,749.9 673.6,743.6 670.4,743.6" fill="#3a8fd2"/>

<rect x="894.2" y="448.4" width="149.8" height="41" rx="5.5" fill="#e8f0fd" stroke="#7ba8f8" stroke-width="3.3"/>
<rect x="888.7" y="463.6" width="11.5" height="11" fill="#ffffff" stroke="#8db4f6" stroke-width="1.1"/>
<polygon points="906.7,469.4 917,459.7 917,478.9" fill="#8c8c8c"/>
<polygon points="917,459.7 927.7,469.4 917,478.9" fill="#55bdd6"/>
<rect x="934" y="471.2" width="18" height="13.5" fill="#a9c3df"/>
<rect x="952" y="471.2" width="17" height="13.5" fill="#e7edf9"/>
<rect x="969" y="471.2" width="18" height="13.5" fill="#d5e0f0"/>
<rect x="987" y="471.2" width="18" height="13.5" fill="#d8e6f5"/>
<rect x="1005" y="471.2" width="17" height="13.5" fill="#e0dfe9"/>
<rect x="1022" y="471.2" width="13" height="13.5" fill="#dde6f6"/>

<defs><filter id="sh" x="-30%" y="-30%" width="160%" height="160%"><feGaussianBlur stdDeviation="1.6"/></filter></defs>
<g transform="translate(-2.2,2.6)" opacity="0.5" filter="url(#sh)">
<path d="M901.5,407.1L941.5,443" stroke="#4e4b38" stroke-width="5.2" stroke-linecap="round" fill="none"/>
<polygon points="943.4,440.2 941.4,435.6 945.7,434 953.6,453.6 932.9,448.1 934.6,444.1 939.5,445.8" fill="#4e4b38"/>
</g>
<path d="M901.5,407.1L941.5,443" stroke="#cb79a9" stroke-width="5.2" stroke-linecap="round" fill="none"/>
<polygon points="943.4,440.2 941.4,435.6 945.7,434 953.6,453.6 932.9,448.1 934.6,444.1 939.5,445.8" fill="#cb79a9"/>
<!-- cursor -->
<path d="M1028.5,612.5V629.2L1032.4,625.6L1035.2,631.8L1037.6,630.7L1034.9,624.7H1040.2Z" fill="#ffffff" stroke="#111111" stroke-width="1"/>
</svg><span style="left:184.70px;top:459.00px;font-size:12px;color:#333333;letter-spacing:-0.691px;">Excel</span><span style="left:184.80px;top:472.00px;font-size:10px;color:#2b6cb3;letter-spacing:-0.281px;">SpreadSheetDemo_...</span><span style="left:684.70px;top:199.00px;font-size:12px;color:#333333;letter-spacing:-0.202px;">Table</span><span style="left:684.80px;top:212.00px;font-size:10px;color:#2b6cb3;letter-spacing:0.117px;">geography</span><span style="left:684.70px;top:269.00px;font-size:12px;color:#333333;letter-spacing:-0.202px;">Table</span><span style="left:684.80px;top:282.00px;font-size:10px;color:#2b6cb3;letter-spacing:-0.028px;">customers</span><span style="left:684.70px;top:349.00px;font-size:12px;color:#333333;letter-spacing:-0.202px;">Table</span><span style="left:684.80px;top:362.00px;font-size:10px;color:#2b6cb3;letter-spacing:0.067px;">customerProfile</span><span style="left:684.70px;top:419.00px;font-size:12px;color:#333333;letter-spacing:-0.202px;">Table</span><span style="left:684.80px;top:432.00px;font-size:10px;color:#2b6cb3;letter-spacing:0.149px;">products</span><span style="left:684.70px;top:499.00px;font-size:12px;color:#333333;letter-spacing:-0.202px;">Table</span><span style="left:684.80px;top:512.00px;font-size:10px;color:#2b6cb3;letter-spacing:0.270px;">promotions</span><span style="left:684.70px;top:579.00px;font-size:12px;color:#333333;letter-spacing:-0.202px;">Table</span><span style="left:684.80px;top:592.00px;font-size:10px;color:#2b6cb3;letter-spacing:0.040px;">manufacturers</span><span style="left:684.70px;top:649.00px;font-size:12px;color:#333333;letter-spacing:-0.202px;">Table</span><span style="left:684.80px;top:662.00px;font-size:10px;color:#2b6cb3;letter-spacing:-0.024px;">manufacturer details...</span><span style="left:434.70px;top:729.00px;font-size:12px;color:#333333;letter-spacing:-0.202px;">Table</span><span style="left:434.80px;top:742.00px;font-size:10px;color:#2b6cb3;letter-spacing:0.044px;">data</span><span style="left:684.70px;top:729.00px;font-size:12px;color:#333333;letter-spacing:-0.126px;">Time Intelligence...</span><span style="left:684.80px;top:742.00px;font-size:10px;color:#2b6cb3;letter-spacing:0.044px;">data</span><span style="left:934.50px;top:459.00px;font-size:12px;color:#333333;letter-spacing:0.174px;">In Memory</span><div style="left:1093px;top:170px;width:320px;height:298.5px;background:#555555;border:1px solid #2d2d2d;border-radius:9px;box-sizing:border-box;"></div><div style="left:1093px;top:472px;width:320px;height:327.5px;background:#555555;border:1px solid #2d2d2d;border-radius:9px;box-sizing:border-box;"></div><div style="left:1093px;top:804px;width:320px;height:34.5px;background:#555555;border:1px solid #2d2d2d;border-radius:9px;box-sizing:border-box;"></div><div style="left:1093px;top:842px;width:320px;height:34.5px;background:#555555;border:1px solid #2d2d2d;border-radius:9px;box-sizing:border-box;"></div><span style="left:1160.55px;top:180.00px;font-size:15px;color:#dcdcdc;-webkit-text-stroke:0.5px #dcdcdc;letter-spacing:0.423px;">In Memory Model Target</span><span style="left:1160.55px;top:483.00px;font-size:15px;color:#dcdcdc;-webkit-text-stroke:0.5px #dcdcdc;letter-spacing:0.033px;">Target Tables</span><span style="left:1131.85px;top:814.00px;font-size:15px;color:#dcdcdc;-webkit-text-stroke:0.5px #dcdcdc;letter-spacing:0.147px;">Advanced</span><span style="left:1161.05px;top:853.00px;font-size:15px;color:#dcdcdc;-webkit-text-stroke:0.5px #dcdcdc;letter-spacing:0.400px;">Metadata</span><div style="left:1107.3px;top:216.5px;width:238.4px;height:32px;background:#ffffff;border-radius:6px;"></div><span style="left:1135.75px;top:265.00px;font-size:15px;color:#f4f4f4;letter-spacing:-0.258px;">Create New Database:</span><div style="left:1107.3px;top:294.6px;width:264px;height:30.2px;background:#f7f7f7;border-radius:6px;"></div><span style="left:1115.65px;top:303.00px;font-size:15px;color:#222222;letter-spacing:0.025px;">SpreadSheetDemo - Authoring</span><span style="left:1135.75px;top:343.00px;font-size:15px;color:#f4f4f4;letter-spacing:-0.313px;">Use Existing Database:</span><div style="left:1107.3px;top:372px;width:238px;height:30.3px;background:#ffffff;border-radius:6px;"></div><span style="left:1120.15px;top:380.00px;font-size:15px;color:#111111;letter-spacing:-0.507px;">Select...</span><div style="left:1107.3px;top:417.4px;width:124.4px;height:37.2px;background:transparent;border:1px solid #747474;border-radius:6px;box-sizing:border-box;"></div><span style="left:1131.25px;top:429.00px;font-size:15px;color:#969696;letter-spacing:0.116px;">Connect All</span><span style="left:1119.65px;top:511.00px;font-size:15px;color:#c6c6c6;-webkit-text-stroke:0.5px #c6c6c6;letter-spacing:0.919px;">Input</span><span style="left:1182.15px;top:511.00px;font-size:15px;color:#c6c6c6;-webkit-text-stroke:0.5px #c6c6c6;letter-spacing:-0.326px;">Sche...</span><span style="left:1244.85px;top:511.00px;font-size:15px;color:#c6c6c6;-webkit-text-stroke:0.5px #c6c6c6;letter-spacing:0.173px;">Table</span><span style="left:1307.85px;top:511.00px;font-size:15px;color:#c6c6c6;-webkit-text-stroke:0.5px #c6c6c6;letter-spacing:0.649px;">Action</span><div style="left:1107.3px;top:532.2px;width:253.6px;height:1.3px;background:#d6d6d6;"></div><span style="left:1125.85px;top:539.00px;font-size:15px;color:#b2b2b2;letter-spacing:-0.244px;">cust...</span><span style="left:1251.05px;top:539.00px;font-size:15px;color:#b2b2b2;letter-spacing:-0.244px;">cust...</span><span style="left:1314.25px;top:539.00px;font-size:15px;color:#b2b2b2;letter-spacing:-0.518px;">Repl...</span><div style="left:1107.3px;top:560.0px;width:253.6px;height:1px;background:#6b6b6b;"></div><span style="left:1125.85px;top:564.00px;font-size:15px;color:#b2b2b2;letter-spacing:0.073px;">pro...</span><span style="left:1251.05px;top:564.00px;font-size:15px;color:#b2b2b2;letter-spacing:0.073px;">pro...</span><span style="left:1314.25px;top:564.00px;font-size:15px;color:#b2b2b2;letter-spacing:-0.518px;">Repl...</span><div style="left:1107.3px;top:584.75px;width:253.6px;height:1px;background:#6b6b6b;"></div><span style="left:1125.85px;top:589.00px;font-size:15px;color:#b2b2b2;letter-spacing:-0.036px;">geo...</span><span style="left:1251.05px;top:589.00px;font-size:15px;color:#b2b2b2;letter-spacing:-0.036px;">geo...</span><span style="left:1314.25px;top:589.00px;font-size:15px;color:#b2b2b2;letter-spacing:-0.518px;">Repl...</span><div style="left:1107.3px;top:609.5px;width:253.6px;height:1px;background:#6b6b6b;"></div><span style="left:1125.85px;top:614.00px;font-size:15px;color:#b2b2b2;letter-spacing:0.216px;">data</span><span style="left:1251.05px;top:614.00px;font-size:15px;color:#b2b2b2;letter-spacing:0.216px;">data</span><span style="left:1314.25px;top:614.00px;font-size:15px;color:#b2b2b2;letter-spacing:-0.518px;">Repl...</span><div style="left:1107.3px;top:634.25px;width:253.6px;height:1px;background:#6b6b6b;"></div><span style="left:1125.85px;top:638.00px;font-size:15px;color:#b2b2b2;letter-spacing:-0.167px;">man...</span><span style="left:1251.05px;top:638.00px;font-size:15px;color:#b2b2b2;letter-spacing:-0.167px;">man...</span><span style="left:1314.25px;top:638.00px;font-size:15px;color:#b2b2b2;letter-spacing:-0.518px;">Repl...</span><div style="left:1107.3px;top:659.0px;width:253.6px;height:1px;background:#6b6b6b;"></div><span style="left:1125.85px;top:663.00px;font-size:15px;color:#b2b2b2;letter-spacing:0.136px;">prod...</span><span style="left:1251.05px;top:663.00px;font-size:15px;color:#b2b2b2;letter-spacing:0.136px;">prod...</span><span style="left:1314.25px;top:663.00px;font-size:15px;color:#b2b2b2;letter-spacing:-0.518px;">Repl...</span><div style="left:1107.3px;top:683.75px;width:253.6px;height:1px;background:#6b6b6b;"></div><span style="left:1125.85px;top:688.00px;font-size:15px;color:#b2b2b2;letter-spacing:-0.167px;">man...</span><span style="left:1251.05px;top:688.00px;font-size:15px;color:#b2b2b2;letter-spacing:-0.167px;">man...</span><span style="left:1314.25px;top:688.00px;font-size:15px;color:#b2b2b2;letter-spacing:-0.518px;">Repl...</span><div style="left:1107.3px;top:708.5px;width:253.6px;height:1px;background:#6b6b6b;"></div><span style="left:1125.85px;top:713.00px;font-size:15px;color:#b2b2b2;letter-spacing:-0.244px;">cust...</span><span style="left:1251.05px;top:713.00px;font-size:15px;color:#b2b2b2;letter-spacing:-0.244px;">cust...</span><span style="left:1314.25px;top:713.00px;font-size:15px;color:#b2b2b2;letter-spacing:-0.518px;">Repl...</span><div style="left:1107.3px;top:733.25px;width:253.6px;height:1px;background:#6b6b6b;"></div><div style="left:1259.2px;top:748px;width:138.6px;height:37.7px;background:transparent;border:1px solid #747474;border-radius:6px;box-sizing:border-box;"></div><span style="left:1266.95px;top:760.00px;font-size:15px;color:#b0b0b0;letter-spacing:-0.181px;">Create Tables Now</span><svg style="left:0;top:0" width="1436" height="1068" viewBox="0 0 1436 1068">
<!-- chevrons -->
<g fill="none" stroke="#e0e0e0" stroke-width="1.3">
<polyline points="1106.2,184.4 1112.6,191.2 1119,184.4"/>
<polyline points="1106.2,487.4 1112.6,494.2 1119,487.4"/>
<polyline points="1110.6,815.4 1116.8,821.6 1110.6,827.8"/>
<polyline points="1110.6,853.8 1116.8,860 1110.6,866.2"/>
</g>
<!-- header diamond icon -->
<polygon points="1131,189.2 1139.9,178.9 1139.9,195.7" fill="#6d6e70"/>
<polygon points="1140.4,178.9 1148.2,188.9 1140.4,195.7" fill="#2eaadc"/>
<!-- select icon -->
<polygon points="1119.1,235.1 1127.9,225.6 1127.9,241" fill="#6d6e70"/>
<polygon points="1129,225.6 1137.8,235.3 1129,241" fill="#2eaadc"/>
<!-- blurred name -->
<rect x="1146.2" y="221.2" width="17.8" height="17.6" fill="#eaeef2"/>
<rect x="1164" y="221.2" width="17" height="17.6" fill="#e4ebf2"/>
<rect x="1181" y="221.2" width="18" height="17.6" fill="#f0e8e6"/>
<rect x="1199" y="221.2" width="18" height="17.6" fill="#d8dfe3"/>
<rect x="1217" y="221.2" width="17.5" height="17.6" fill="#ece9e4"/>
<rect x="1234.5" y="221.2" width="17.3" height="17.6" fill="#e4e3e8"/>
<rect x="1234.5" y="238.8" width="17.3" height="5.5" fill="#eef0f8"/>
<polygon points="1323.4,231.1 1335.3,231.1 1329.3,236.9" fill="#8a8a8a"/>
<polygon points="1320,384 1332.4,384 1326.2,390" fill="#8a8a8a"/>
<g fill="none" stroke="#d6d6d6" stroke-width="1.4">
<path d="M1356.8999999999999,226.5A6.9,6.9 0 0 1 1368.6999999999998,230.29999999999998"/>
<path d="M1367.1,235.9A6.9,6.9 0 0 1 1355.3999999999999,231.7"/></g>
<polygon points="1366.1,229.7 1370.1,228.5 1369.3,233.4" fill="#d6d6d6"/>
<polygon points="1357.8999999999999,232.5 1354.1,233.5 1354.6999999999998,228.79999999999998" fill="#d6d6d6"/><g fill="none" stroke="#d6d6d6" stroke-width="1.4">
<path d="M1356.8999999999999,382.79999999999995A6.9,6.9 0 0 1 1368.6999999999998,386.59999999999997"/>
<path d="M1367.1,392.2A6.9,6.9 0 0 1 1355.3999999999999,388.0"/></g>
<polygon points="1366.1,386.0 1370.1,384.79999999999995 1369.3,389.7" fill="#d6d6d6"/>
<polygon points="1357.8999999999999,388.79999999999995 1354.1,389.79999999999995 1354.6999999999998,385.09999999999997" fill="#d6d6d6"/>
<!-- add server small -->
<rect x="1383.6" y="223.5" width="11.8" height="17" fill="#4a4a4a" stroke="#a8a8a8" stroke-width="1.1"/>
<path d="M1387,224.2H1395M1387,226.5H1392.8" stroke="#b4b4b4" stroke-width="1"/>
<path d="M1384.6,228.8H1394.4M1384.6,231.8H1394.4M1384.6,234.2H1394.4" stroke="#6a6a6a" stroke-width="1.2"/>
<path d="M1385.2,237.6H1389.2" stroke="#7fd6c8" stroke-width="1.2"/>
<path d="M1378,225.8H1385.6M1381.8,222V229.6" stroke="#3b9be0" stroke-width="3.2"/>
<!-- radios -->
<circle cx="1115.9" cy="272.3" r="8" fill="#f2f2f2" stroke="#2a2a2a" stroke-width="1"/>
<circle cx="1115.9" cy="272.3" r="4.6" fill="#000000"/>
<circle cx="1115.9" cy="350.2" r="8" fill="#e9e9e9" stroke="#2a2a2a" stroke-width="1"/>
<!-- target tables icon -->
<path d="M1131.2,496V480.3H1144.2" fill="none" stroke="#a88bc2" stroke-width="1"/>
<path d="M1132.6,498V482.4H1146" fill="none" stroke="#a88bc2" stroke-width="1"/>
<rect x="1133.6" y="483.4" width="15.2" height="17.2" fill="#484848"/>
<g fill="#c8c8c8"><rect x="1134.4" y="484" width="3.7" height="3.2"/><rect x="1139.9" y="484" width="4" height="3.2"/><rect x="1146" y="484" width="2.3" height="3.2"/></g>
<g fill="#c79eea">
<rect x="1134.4" y="488.2" width="3.7" height="3.4"/><rect x="1139.9" y="488.2" width="4" height="3.4"/><rect x="1146" y="488.2" width="2.3" height="3.4"/>
<rect x="1134.4" y="492.9" width="3.7" height="3.1"/><rect x="1139.9" y="492.9" width="4" height="3.1"/><rect x="1146" y="492.9" width="2.3" height="3.1"/>
<rect x="1134.4" y="496.9" width="3.7" height="3.2"/><rect x="1139.9" y="496.9" width="4" height="3.2"/><rect x="1146" y="496.9" width="2.3" height="3.2"/>
</g>
<!-- info icon -->
<circle cx="1139.5" cy="860" r="8.4" fill="none" stroke="#4b93c8" stroke-width="1.3"/>
</svg><span style="left:1136.20px;top:853.00px;font-size:14px;color:#d8d8d8;font-weight:700;font-family:'Liberation Serif',serif;">i</span><svg style="left:0;top:0;z-index:5;filter:drop-shadow(0.5px 1.5px 2.2px rgba(0,0,0,0.55))" width="1436" height="1068" viewBox="0 0 1436 1068"><rect x="1068.65" y="163.4" width="366" height="311.95" fill="none" stroke="#4fb2eb" stroke-width="3.3"/></svg></div></body></html>
